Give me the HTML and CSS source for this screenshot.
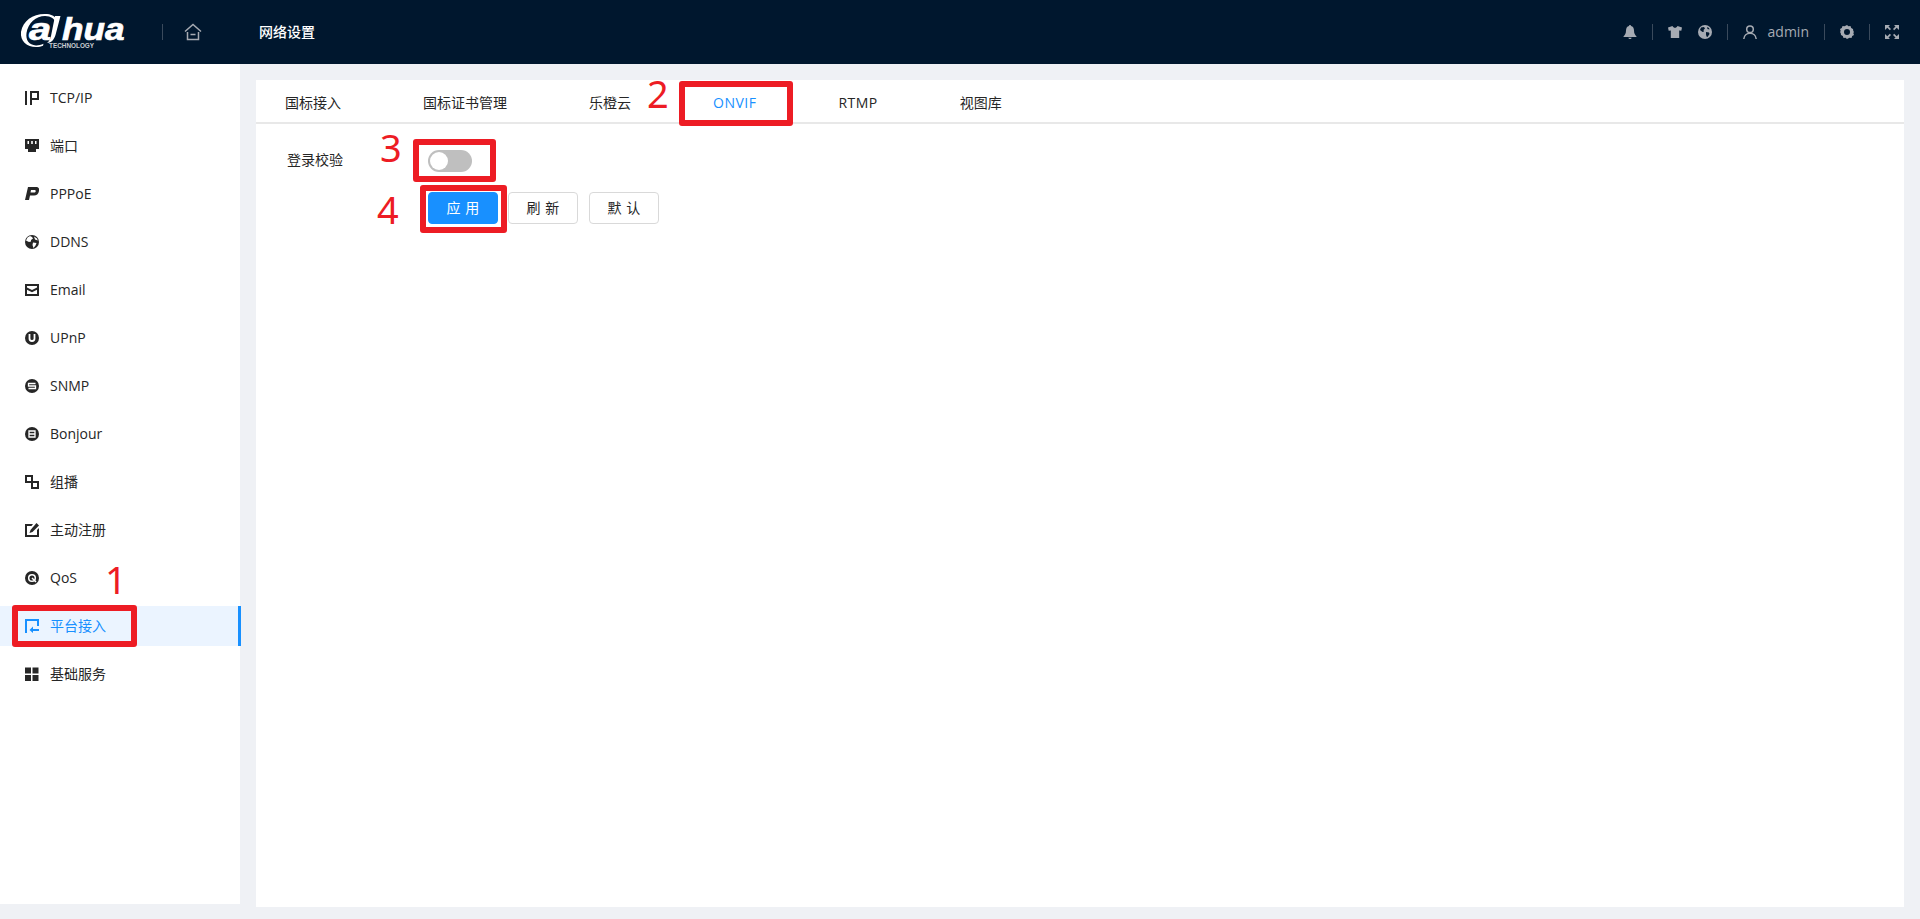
FILE: index.html
```html
<!DOCTYPE html>
<html lang="zh-CN">
<head>
<meta charset="utf-8">
<title>网络设置</title>
<link rel="stylesheet" href="styles.css">
</head>
<body>
<header class="topbar">
  <svg class="logo" width="110" height="38" viewBox="0 0 110 38">
    <path fill="#fff" fill-rule="evenodd" d="M27 1C14 0 3 7 1 19c-1 9 6 15 15 15 3 0 5-.5 7-1.300l.5-2C21 32 18 32.500 16 32.400 9 32 5.500 27 6.500 20 8 10 16 3 25 3c6 0 10 3 10.500 7l2.500.5C38 5 33 1.500 27 1z"/>
    <path fill="#fff" d="M35 3h5.500l-5 19C34 27 31 30 27 30c2-1.500 3.500-4 4-7z"/>
    <text class="logo-word" transform="translate(9 27) scale(1.24 1)">a</text>
    <text class="logo-word" transform="translate(42 27) scale(1.1 1)">hua</text>
    <text class="logo-sub" x="29" y="35">TECHNOLOGY</text>
  </svg>
  <span class="vsep home-sep"></span>
  <svg class="home" width="18" height="18" viewBox="0 0 18 18"><path fill="none" stroke="#a6abb3" stroke-width="1.500" d="M1 8.500 9 1.500l8 7M3.500 9v7.500h11V9M6.500 11.500h5"/></svg>
  <span class="page-title">网络设置</span>
  <div class="top-tools">
    <svg class="tool" width="14" height="14" viewBox="0 0 14 14"><path fill="#a6abb3" d="M7 0c.7 0 1 .5 1 1 2 .5 3 2.200 3 4.500 0 3 1 4.500 2.500 6V12H.5v-.5C2 10 3 8.500 3 5.500 3 3.200 4 1.500 6 1c0-.5.3-1 1-1zM5.300 12.700h3.400C8.500 13.500 7.800 14 7 14s-1.500-.5-1.700-1.300z"/></svg>
    <span class="vsep"></span>
    <svg class="tool" width="14" height="14" viewBox="0 0 14 14"><path fill="#a6abb3" d="M4.500 1C5 2.200 6 2.800 7 2.800S9 2.200 9.500 1L14 2.500l-.7 3.300-2.100-.3V13H2.800V5.500l-2.100.3L0 2.500z"/></svg>
    <svg class="tool globe" width="14" height="14" viewBox="0 0 14 14"><circle cx="7" cy="7" r="7" fill="#a6abb3"/><path fill="#00172e" d="M3 2.500 6 2l1 1.500-1.500 1.500L6 6.500 4.500 7 2 5zM8 7l3 .5.500 1.500-2 3-1-.5-.5-2zM9 2l2 1 .5 1.500-2-.5z"/></svg>
    <span class="vsep"></span>
    <svg class="tool" width="14" height="14" viewBox="0 0 14 14"><g fill="none" stroke="#a6abb3" stroke-width="1.500"><circle cx="7" cy="4.200" r="3.300"/><path d="M.8 14c.3-3.500 3-5.800 6.200-5.800s5.900 2.300 6.200 5.800"/></g></svg>
    <span class="user">admin</span>
    <span class="vsep"></span>
    <svg class="tool" width="14" height="14" viewBox="0 0 14 14"><path fill="#a6abb3" fill-rule="evenodd" d="M7 0l1.500 1.300 2-.2.700 1.900 1.800 1L13.300 6l.7 1-.7 1 .7 2-1.800 1-.7 1.900-2-.2L7 14l-1.500-1.300-2 .2-.7-1.900-1.800-1L.7 8 0 7l.7-1L0 4l1.800-1 .7-1.900 2 .2zm0 4a3 3 0 1 0 0 6 3 3 0 0 0 0-6z"/></svg>
    <span class="vsep"></span>
    <svg class="tool" width="14" height="14" viewBox="0 0 14 14"><path fill="#a6abb3" d="M0 0h5L3.500 1.500 6 4 4.800 5.200 2.300 2.700 0 5zM14 0v5l-2.300-2.300-2.500 2.500L8 4l2.500-2.500L9 0zM0 14V9l2.300 2.300 2.500-2.500L6 10l-2.500 2.500L5 14zM14 14H9l1.500-1.500L8 10l1.200-1.200 2.500 2.500L14 9z"/></svg>
  </div>
</header>

<div class="body-row">
  <nav class="sidebar">
    <a class="nav-item">
      <svg class="nav-icon" viewBox="0 0 14 14"><path fill="#262626" fill-rule="evenodd" d="M0 0h2v14H0zM5 0h9v9H7v5H5zm2 2v5h5V2z"/></svg>
      <span>TCP/IP</span></a>
    <a class="nav-item">
      <svg class="nav-icon" viewBox="0 0 14 14"><path fill="#262626" fill-rule="evenodd" d="M0 0h14v10h-3v3H3v-3H0zm2.500 2v3H4V2zm3.700 0v3h1.600V2zM10 2v3h1.500V2z"/></svg>
      <span>端口</span></a>
    <a class="nav-item">
      <svg class="nav-icon" viewBox="0 0 14 14"><path fill="#262626" fill-rule="evenodd" d="M3 0h8c2.500 0 3.500 1.500 3 4-.5 3-2.500 4.500-5 4.500H5L4 13H0zm3 3-.5 2.500H9c1 0 1.700-.5 1.700-1.300S10.300 3 9.500 3z"/></svg>
      <span>PPPoE</span></a>
    <a class="nav-item">
      <svg class="nav-icon" viewBox="0 0 14 14"><circle cx="7" cy="7" r="7" fill="#262626"/><path fill="#fff" d="M5 1 7 2l1 1.500-2 1.500v1.500L4 7 1 5.500 2.500 2.500zM8 7.500l3.500.5-1 2.500-2 2.500L7.500 10zM9 1.500l3 2 .8 2-2.800-1z"/></svg>
      <span>DDNS</span></a>
    <a class="nav-item">
      <svg class="nav-icon" viewBox="0 0 14 14"><path fill="#262626" fill-rule="evenodd" d="M0 1h14v12H0zm2 2v1.500L7 7l5-2.500V3zm0 3.700V11h10V6.700L7 9.200z"/></svg>
      <span>Email</span></a>
    <a class="nav-item">
      <svg class="nav-icon" viewBox="0 0 14 14"><circle cx="7" cy="7" r="7" fill="#262626"/><path fill="none" stroke="#fff" stroke-width="1.800" d="M4.500 3v4.500a2.500 2.500 0 0 0 5 0V3"/></svg>
      <span>UPnP</span></a>
    <a class="nav-item">
      <svg class="nav-icon" viewBox="0 0 14 14"><circle cx="7" cy="7" r="7" fill="#262626"/><path fill="none" stroke="#fff" stroke-width="1.300" d="M10.500 4.500h-7v2.500h7v2.500h-7"/></svg>
      <span>SNMP</span></a>
    <a class="nav-item">
      <svg class="nav-icon" viewBox="0 0 14 14"><circle cx="7" cy="7" r="7" fill="#262626"/><path fill="none" stroke="#fff" stroke-width="1.300" d="M4 4h6v6H4zM4 7h6"/></svg>
      <span>Bonjour</span></a>
    <a class="nav-item">
      <svg class="nav-icon" viewBox="0 0 14 14"><path fill="none" stroke="#262626" stroke-width="2" d="M1 1h6v6H1zM7 7h6v6H7z"/></svg>
      <span>组播</span></a>
    <a class="nav-item">
      <svg class="nav-icon" viewBox="0 0 14 14"><path fill="#262626" d="M0 1h8L6.500 3H2v9h10V7l2-2v9H0z"/><path fill="#262626" d="M11.500 0 14 2.500 7.500 9 4.500 10l1-3z"/></svg>
      <span>主动注册</span></a>
    <a class="nav-item">
      <svg class="nav-icon" viewBox="0 0 14 14"><circle cx="7" cy="7" r="7" fill="#262626"/><circle cx="7" cy="7" r="3.300" fill="none" stroke="#fff" stroke-width="1.500"/><path stroke="#fff" stroke-width="1.500" d="M7 7l4 4"/></svg>
      <span>QoS</span></a>
    <a class="nav-item active">
      <svg class="nav-icon" viewBox="0 0 14 14"><path fill="#1890ff" d="M0 0h14v7h-2V2H2v12H0z"/><path fill="#1890ff" d="M14 10H8V7.500L4.500 11 8 14v-2h6z"/></svg>
      <span>平台接入</span></a>
    <a class="nav-item">
      <svg class="nav-icon" viewBox="0 0 14 14"><path fill="#262626" d="M0 .5h6v6H0zM7.500 .5h6v6h-6zM0 8h6v6H0zM7.500 8h6v6h-6z"/></svg>
      <span>基础服务</span></a>
  </nav>

  <main class="panel">
    <div class="tabs">
      <span class="tab">国标接入</span>
      <span class="tab">国标证书管理</span>
      <span class="tab">乐橙云</span>
      <span class="tab latin current">ONVIF</span>
      <span class="tab latin">RTMP</span>
      <span class="tab">视图库</span>
    </div>
    <div class="form">
      <div class="form-row">
        <label class="form-label">登录校验</label>
        <span class="switch"><span class="knob"></span></span>
      </div>
      <div class="form-row actions">
        <span class="form-label"></span>
        <button class="btn primary"><span>应用</span></button>
        <button class="btn"><span>刷新</span></button>
        <button class="btn"><span>默认</span></button>
      </div>
    </div>
  </main>
</div>

<div class="mark mark-1"></div>
<div class="mark mark-2"></div>
<div class="mark mark-3"></div>
<div class="mark mark-4"></div>
<span class="num num-1">1</span>
<span class="num num-2">2</span>
<span class="num num-3">3</span>
<span class="num num-4">4</span>
</body>
</html>
```
FILE: styles.css
```css
* { box-sizing: border-box; }
html, body { margin: 0; height: 100%; }
body {
  position: relative;
  height: 919px;
  overflow: hidden;
  background: #eff1f5;
  color: #262626;
  font: 14px/20px "Open Sans", "Noto Sans CJK SC", sans-serif;
}
.topbar {
  height: 64px;
  background: #00172e;
  display: flex;
  align-items: center;
  padding-left: 20px;
}
.logo { flex: none; margin-right: 32px; }
.logo-word { font: italic 700 32px "Liberation Sans", sans-serif; fill: #fff; stroke: #fff; stroke-width: .7px; }
.logo-sub { font: 700 6.400px "Liberation Sans", sans-serif; fill: #c9ccd1; }
.vsep { width: 1px; height: 16px; background: #3a4a5c; flex: none; }
.home { margin-left: 21px; flex: none; }
.page-title { margin-left: 57px; color: #fff; font-weight: 500; }
.top-tools {
  margin-left: auto;
  margin-right: 21px;
  display: flex;
  align-items: center;
  gap: 15px;
  color: #a6abb3;
}
.tool { flex: none; display: block; }
.globe { margin-left: 1px; }
.user { margin-left: -4px; }

.body-row { display: flex; align-items: flex-start; }
.sidebar {
  width: 240px;
  height: 840px;
  background: #fff;
  padding-top: 14px;
  display: flex;
  flex-direction: column;
  gap: 8px;
  flex: none;
}
.nav-item {
  height: 40px;
  display: flex;
  align-items: center;
  gap: 11px;
  padding-left: 25px;
}
.nav-icon { width: 14px; height: 14px; flex: none; }
.nav-item.active {
  background: #ebf4ff;
  color: #1890ff;
  box-shadow: inset -3px 0 0 #1890ff;
  width: 241px;
}
.panel {
  flex: 1;
  height: 827px;
  margin: 16px 16px 0;
  background: #fff;
}
.tabs {
  height: 44px;
  display: flex;
  align-items: center;
  gap: 82px;
  padding-left: 29px;
  padding-top: 4px;
  border-bottom: 2px solid #e8e8e8;
}
.latin { letter-spacing: .5px; }
.tab.current { color: #1890ff; }
.form { padding: 26px 0 0 31px; }
.form-row { display: flex; align-items: center; height: 22px; }
.form-label { width: 141px; flex: none; padding-bottom: 2px; }
.switch {
  width: 44px;
  height: 22px;
  border-radius: 11px;
  background: #bfbfbf;
  position: relative;
  display: block;
}
.knob {
  position: absolute;
  left: 2px;
  top: 2px;
  width: 18px;
  height: 18px;
  border-radius: 50%;
  background: #fff;
}
.actions { height: 32px; margin-top: 20px; gap: 10px; }
.actions .form-label { margin-right: -10px; }
.btn {
  width: 70px;
  height: 32px;
  padding: 0;
  border: 1px solid #d9d9d9;
  border-radius: 4px;
  background: #fff;
  color: #262626;
  font: inherit;
}
.btn + .btn + .btn { margin-left: 1px; }
.btn span { letter-spacing: .34em; margin-right: -.34em; }
.btn.primary { background: #1890ff; border-color: #1890ff; color: #fff; }

.mark { position: absolute; border: 6px solid #ed1c24; border-radius: 3px; }
.mark-1 { left: 12px; top: 605px; width: 125px; height: 42px; }
.mark-2 { left: 679px; top: 81px; width: 114px; height: 45px; }
.mark-3 { left: 413px; top: 139px; width: 83px; height: 43px; }
.mark-4 { left: 420px; top: 185px; width: 87px; height: 48px; }
.num {
  position: absolute;
  color: #ed1c24;
  font: 38px/38px "Noto Sans", sans-serif;
}
.num-1 { left: 105px; top: 560px; }
.num-2 { left: 647px; top: 74px; }
.num-3 { left: 380px; top: 128px; }
.num-4 { left: 377px; top: 190px; }
```
